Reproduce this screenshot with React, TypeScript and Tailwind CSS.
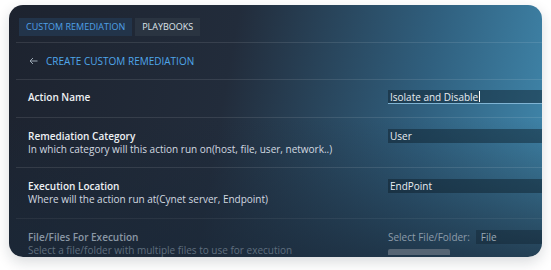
const FONT = { fontFamily: '"Open Sans", "Noto Sans", sans-serif' };

type Row = {
  label: string;
  hint?: string;
  height: string;
  dim?: boolean;
  field: React.ReactNode;
};

function Field({ children, underline }: { children: React.ReactNode; underline?: boolean }) {
  return (
    <div
      className={`h-[14px] flex items-center pl-[2px] bg-[#0c1a26]/45 text-[10px] leading-none text-[#e8edf2] ${
        underline ? "border-b border-[#7fb4d4]" : ""
      }`}
    >
      {children}
    </div>
  );
}

const ROWS: Row[] = [
  {
    label: "Action Name",
    height: "h-[38px]",
    field: (
      <Field underline>
        Isolate and Disable
        <span className="w-px h-[11px] bg-white ml-px" />
      </Field>
    ),
  },
  {
    label: "Remediation Category",
    hint: "In which category will this action run on(host, file, user, network..)",
    height: "h-[50px]",
    field: <Field>User</Field>,
  },
  {
    label: "Execution Location",
    hint: "Where will the action run at(Cynet server, Endpoint)",
    height: "h-[51px]",
    field: <Field>EndPoint</Field>,
  },
  {
    label: "File/Files For Execution",
    hint: "Select a file/folder with multiple files to use for execution",
    height: "h-[60px]",
    dim: true,
    field: (
      <div>
        <div className="flex items-center h-[14px] text-[10px] text-[#8d9cab]">
          <span className="mr-[6px]">Select File/Folder:</span>
          <div className="flex-1 h-[14px] flex items-center pl-[5px] bg-[#0c1a26]/35 text-[#9aa8b6]">
            File
          </div>
        </div>
        <div className="mt-[5px] w-[62px] h-[6px] bg-[#566574] rounded-t-[2px]" />
      </div>
    ),
  },
];

export default function App() {
  return (
    <div className="w-[551px] h-[270px] bg-white pl-[9px] pt-[5px]" style={FONT}>
      <div className="w-[533px] h-[252px] rounded-[14px] overflow-hidden shadow-[0_5px_14px_rgba(20,30,45,0.16)] bg-[linear-gradient(to_bottom,rgba(26,36,50,0)_45%,rgba(26,40,56,0.75)_100%),linear-gradient(100deg,#1d232f_0%,#222c3b_40%,#30607f_75%,#4189ae_100%)]">
        {/* tabs */}
        <div className="flex gap-[3px] pl-[10px] pt-[13px]">
          <div className="h-[18px] px-[7px] flex items-center bg-[#22344a] text-[9px] text-[#4fa0e6]">
            CUSTOM REMEDIATION
          </div>
          <div className="h-[18px] px-[7px] flex items-center bg-[#2a3441] text-[9px] text-[#dfe4ea]">
            PLAYBOOKS
          </div>
        </div>

        <div className="ml-[7px] mt-[6px]">
          {/* header */}
          <div className="h-[37px] border-t border-white/10 flex items-center pl-[13px]">
            <svg width="9" height="8" viewBox="0 0 9 8" fill="none" className="mr-[8px]">
              <path d="M8.5 4H1M4 1L1 4l3 3" stroke="#9aa6b2" strokeWidth="1" />
            </svg>
            <span className="text-[10px] text-[#4fa6ea] font-medium">CREATE CUSTOM REMEDIATION</span>
          </div>

          {ROWS.map((row, i) => (
            <div
              key={row.label}
              className={`${row.height} flex ${i === 3 ? "border-t border-white/[0.06]" : "border-t border-white/10"}`}
            >
              <div className={`w-[372px] pl-[12px] ${i === 0 ? "pt-[10px]" : "pt-[11px]"}`}>
                <div
                  className={`text-[10px] leading-[14px] font-semibold ${
                    row.dim ? "text-[#8a97a5]" : "text-[#eef1f4]"
                  }`}
                >
                  {row.label}
                </div>
                {row.hint && (
                  <div
                    className={`text-[10px] leading-[13px] ${
                      row.dim ? "text-[#5f6e7e]" : "text-[#d2d9e0]"
                    }`}
                  >
                    {row.hint}
                  </div>
                )}
              </div>
              <div className={`flex-1 ${i === 0 ? "pt-[10px]" : "pt-[11px]"}`}>{row.field}</div>
            </div>
          ))}
        </div>
      </div>
    </div>
  );
}
